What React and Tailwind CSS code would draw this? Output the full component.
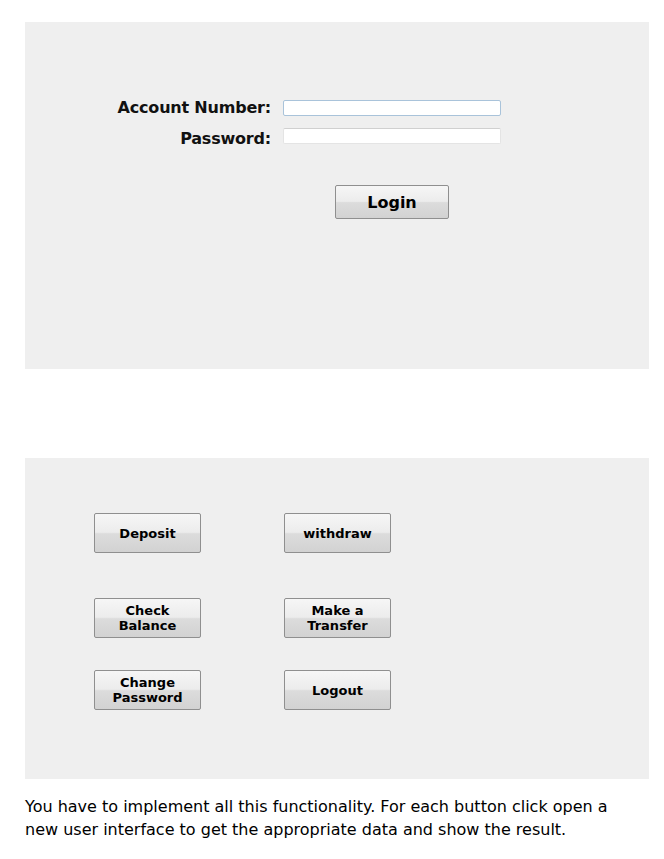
import { useState } from 'react'

const btn =
  'flex items-center justify-center text-center rounded-[2px] border border-[#8f8f8f] bg-[linear-gradient(to_bottom,#f6f6f6_0%,#ececec_48%,#dcdcdc_52%,#d2d2d2_100%)] text-black font-bold leading-[15px]'

function ActionButton({ children, onClick }) {
  return (
    <button type="button" onClick={onClick} className={`${btn} w-[107px] h-[40px] text-[13px]`}>
      <span>{children}</span>
    </button>
  )
}

export default function App() {
  const [account, setAccount] = useState('')
  const [password, setPassword] = useState('')

  return (
    <div className="w-[664px] min-h-[859px] bg-white pt-[22px] font-['DejaVu_Sans',Verdana,sans-serif]">
      {/* login panel */}
      <div className="ml-[25px] w-[624px] h-[347px] bg-[#efefef] pt-[78px]">
        <div className="flex items-center h-[16px]">
          <label className="w-[247px] text-right pr-[1px] text-[16px] font-bold text-[#111] tracking-[-0.2px]">Account Number:</label>
          <input
            value={account}
            onChange={(e) => setAccount(e.target.value)}
            className="ml-[11px] w-[218px] h-[16px] bg-white border border-[#a9c3da] rounded-[2px] outline-none text-[12px] px-1"
          />
        </div>
        <div className="flex items-center h-[16px] mt-[12px]">
          <label className="w-[247px] text-right pr-[1px] pt-[6px] text-[16px] font-bold text-[#111] tracking-[-0.2px]">Password:</label>
          <input
            type="password"
            value={password}
            onChange={(e) => setPassword(e.target.value)}
            className="ml-[11px] w-[218px] h-[16px] bg-white border border-[#e4e4e4] border-t-[#d0d0d0] rounded-[2px] outline-none text-[12px] px-1"
          />
        </div>
        <div className="mt-[41px] ml-[310px]">
          <button type="button" className={`${btn} w-[114px] h-[34px] text-[16px]`}>
            Login
          </button>
        </div>
      </div>

      {/* menu panel */}
      <div className="ml-[25px] mt-[89px] w-[624px] h-[321px] bg-[#efefef] pt-[55px] pl-[69px]">
        <div className="grid grid-cols-[107px_107px] gap-x-[83px]">
          <ActionButton>Deposit</ActionButton>
          <ActionButton>withdraw</ActionButton>
        </div>
        <div className="grid grid-cols-[107px_107px] gap-x-[83px] mt-[45px]">
          <ActionButton>Check<br />Balance</ActionButton>
          <ActionButton>Make a<br />Transfer</ActionButton>
        </div>
        <div className="grid grid-cols-[107px_107px] gap-x-[83px] mt-[32px]">
          <ActionButton>Change<br />Password</ActionButton>
          <ActionButton>Logout</ActionButton>
        </div>
      </div>

      <p className="ml-[25px] mt-[16px] w-[605px] text-[16px] leading-[23px] text-black">
        You have to implement all this functionality. For each button click open a new user interface to get the appropriate data and show the result.
      </p>
    </div>
  )
}
